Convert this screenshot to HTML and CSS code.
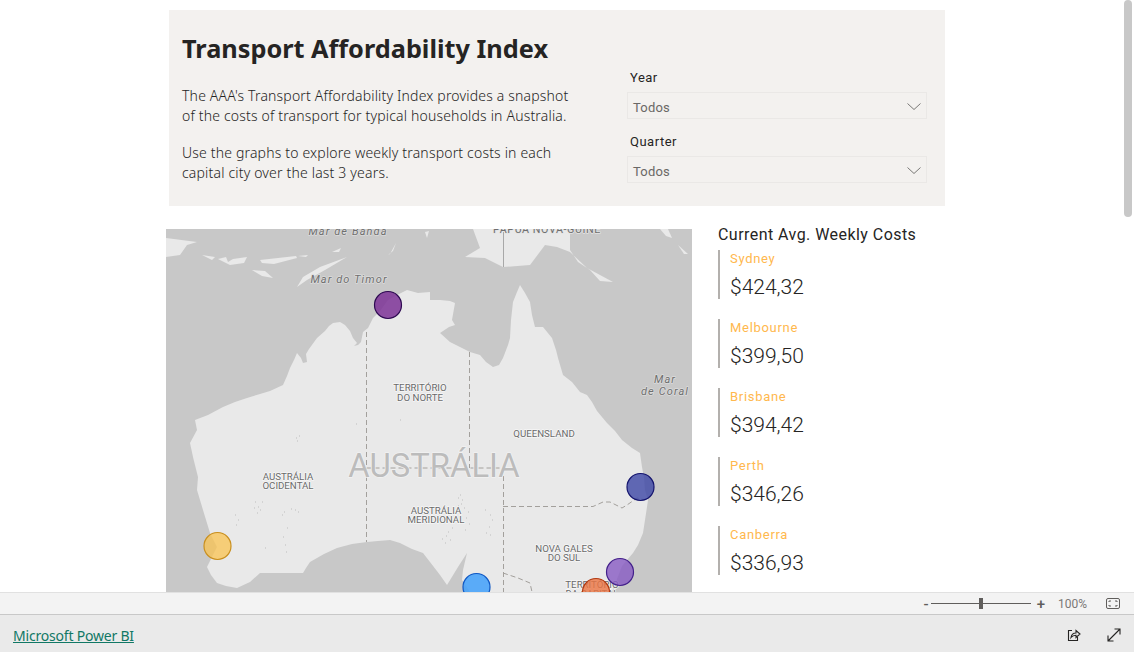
FILE: index.html
```html
<!DOCTYPE html>
<html lang="en">
<head>
  <meta charset="UTF-8">
  <title>Transport Affordability Index</title>
  <link rel="stylesheet" href="styles.css">
</head>
<body>
  <div class="report">
    <!-- Title and slicers -->
    <section class="intro">
      <div class="intro-text">
        <h1>Transport Affordability Index</h1>
        <p>The AAA's Transport Affordability Index provides a snapshot<br>of the costs of transport for typical households in Australia.</p>
        <p>Use the graphs to explore weekly transport costs in each<br>capital city over the last 3 years.</p>
      </div>
      <div class="slicers">
        <div class="slicer">
          <label>Year</label>
          <div class="dropdown">
            <span>Todos</span>
            <svg class="chevron" viewBox="0 0 14 7"><path d="M0.5 0.5 L7 6.5 L13.5 0.5"/></svg>
          </div>
        </div>
        <div class="slicer">
          <label>Quarter</label>
          <div class="dropdown">
            <span>Todos</span>
            <svg class="chevron" viewBox="0 0 14 7"><path d="M0.5 0.5 L7 6.5 L13.5 0.5"/></svg>
          </div>
        </div>
      </div>
    </section>

    <section class="content">
      <!-- Map, coordinates are page pixels -->
      <div class="map">
        <svg viewBox="166 229 526 363" width="526" height="363">
          <rect class="sea" x="166" y="229" width="526" height="363"/>
          <g class="land">
            <path d="M208 415 L223 407 L235 402 L247 398 L260 394 L270 391 L283 385 L287 376 L290 368 L294 360 L297 353 L301 358 L303 363 L307 362 L306 354 L309 349 L317 338 L325 331 L329 326 L333 323 L340 322 L345 325 L350 331 L353 338 L357 343 L354 346 L358 345 L361 342 L363 332 L368 328 L373 318 L380 311 L388 300 L397 295 L407 290 L418 293 L430 292 L430 300 L440 300 L450 301 L455 303 L452 320 L455 325 L449 327 L440 333 L450 342 L460 347 L470 352 L480 355 L486 362 L493 367 L499 365 L503 358 L508 345 L510 338 L511 320 L513 302 L517 292 L520 285 L525 293 L530 302 L532 315 L535 327 L543 327 L552 338 L556 350 L558 358 L563 375 L572 382 L580 392 L587 395 L592 402 L597 411 L607 423 L615 431 L622 440 L632 448 L640 453 L641 460 L642 467 L644 478 L645 490 L648 500 L647 507 L645 520 L643 533 L638 545 L633 553 L622 566 L612 592 L470 592 L462 580 L463 570 L467 553 L458 567 L447 585 L440 575 L430 562 L423 553 L412 549 L400 543 L390 540 L378 541 L367 542 L352 544 L337 548 L324 554 L310 562 L306 568 L303 573 L280 573 L260 573 L250 582 L237 588 L226 586 L217 583 L211 575 L207 567 L217 547 L210 533 L203 510 L200 500 L197 490 L198 477 L193 457 L190 443 L197 430 L195 420 Z"/>
            <path d="M473 229 L480 248 L465 257 L485 258 L503 267 L530 265 L545 245 L557 247 L570 252 L587 268 L600 275 L613 282 L600 281 L590 270 L578 262 L570 250 L570 229 Z"/>
            <path d="M166 238 L197 242 L187 245 L180 255 L166 257 Z"/>
            <path d="M202 255 L215 257 L212 260 Z"/>
            <path d="M218 259 L226 257 L228 262 L233 259 L247 257 L244 263 L230 265 Z"/>
            <path d="M260 260 L296 256 L297 258 L274 264 L262 263 Z"/>
            <path d="M298 256 L308 255 L306 257 Z"/>
            <path d="M252 270 L265 271 L273 278 L262 276 Z"/>
            <path d="M297 287 L303 277 L320 267 L347 257 L325 270 L307 280 Z"/>
            <path d="M332 252 L341 248 L339 252 Z"/>
            <path d="M390 254 L396 243 L393 251 L388 255 Z"/>
            <path d="M660 229 L668 229 L672 238 L666 236 Z"/>
            <path d="M678 245 L688 254 L684 254 Z"/>
            <path d="M425 232 L429 231 L427 238 Z"/>
          </g>
          <g class="borders">
            <path d="M366.5 332 V542"/>
            <path d="M366.5 468 H503"/>
            <path d="M469.5 352 V468"/>
            <path d="M503.5 468 V592"/>
            <path d="M503 506.5 H593 L603 502 L610 502 L622 508 L627 505 L637 498 L645 500"/>
            <path d="M503 573 L518 578 L530 583 L532 592"/>
          </g>
          <path class="png-border" d="M503.5 232 V267"/>
          <g class="dots">
            <path d="M296 438h1M299 436h1M297 441h1M400 420h1M356 424h1M262 502h1M258 507h1M254 508h1M260 510h1M257 513h1M295 510h1M298 512h1M291 509h1M235 515h1M238 520h1M236 525h1M284 512h1M282 515h1M287 528h1M283 537h1M285 545h1M286 552h1M265 548h1M255 502h1"/>
            <path d="M460 495h1M458 498h1M462 500h1M461 504h1M458 506h1M464 508h1M468 512h1M466 518h1M469 524h1M465 530h1M452 528h1M448 532h1M446 536h1M442 539h1M450 540h1M445 543h1M485 510h1M490 515h1M492 520h1M489 527h1M486 533h1M490 535h1"/>
          </g>
          <g class="sea-labels">
            <text x="348" y="235">Mar de Banda</text>
            <text x="349" y="283">Mar do Timor</text>
            <text x="665" y="383">Mar</text>
            <text x="665" y="395">de Coral</text>
          </g>
          <text class="country-label top" x="547" y="233">PAPUA NOVA-GUINÉ</text>
          <text class="country-label" x="434" y="477">AUSTRÁLIA</text>
          <g class="state-labels">
            <text x="420" y="391">TERRITÓRIO</text>
            <text x="420" y="401">DO NORTE</text>
            <text x="544" y="437">QUEENSLAND</text>
            <text x="288" y="480">AUSTRÁLIA</text>
            <text x="288" y="489">OCIDENTAL</text>
            <text x="436" y="514">AUSTRÁLIA</text>
            <text x="436" y="523">MERIDIONAL</text>
            <text x="564" y="552">NOVA GALES</text>
            <text x="564" y="561">DO SUL</text>
            <text x="592" y="588">TERRITÓRIO</text>
            <text x="592" y="597">DA CAPITAL</text>
          </g>
          <circle class="dot-purple" cx="388" cy="305" r="13.5"/>
          <circle class="dot-yellow" cx="217.5" cy="546" r="13.5"/>
          <circle class="dot-navy" cx="640.5" cy="487" r="13.5"/>
          <circle class="dot-orange" cx="596" cy="592" r="13.5"/>
          <circle class="dot-lilac" cx="620" cy="572" r="13.5"/>
          <circle class="dot-blue" cx="476.5" cy="587" r="13.5"/>
        </svg>
      </div>

      <!-- Cards -->
      <div class="costs">
        <h2>Current Avg. Weekly Costs</h2>
        <div class="card"><span class="city">Sydney</span><span class="cost">$424,32</span></div>
        <div class="card"><span class="city">Melbourne</span><span class="cost">$399,50</span></div>
        <div class="card"><span class="city">Brisbane</span><span class="cost">$394,42</span></div>
        <div class="card"><span class="city">Perth</span><span class="cost">$346,26</span></div>
        <div class="card"><span class="city">Canberra</span><span class="cost">$336,93</span></div>
      </div>
    </section>
    <div class="scroll-thumb"></div>
  </div>

  <div class="zoom-bar">
    <span class="zoom-sign minus">-</span>
    <div class="zoom-track"><div class="zoom-thumb"></div></div>
    <span class="zoom-sign plus">+</span>
    <span class="zoom-value">100%</span>
    <svg class="fit-icon" width="14" height="11" viewBox="0 0 14 11">
      <rect x="0.5" y="0.5" width="13" height="10" rx="1.5"/>
      <path d="M3 4 V3 H5 M9 3 H11 V4 M11 7 V8 H9 M5 8 H3 V7"/>
    </svg>
  </div>

  <footer class="footer">
    <a href="#">Microsoft Power BI</a>
    <div class="footer-icons">
      <svg width="14" height="14" viewBox="0 0 14 14">
        <path d="M5 2.5 H1.5 V12.5 H10.5 V9"/>
        <path d="M4 9.5 C4.5 6.5 6.5 5 9 5 V2.5 L13 6 L9 9.5 V7.2 C7 7.2 5.2 8 4 9.5 Z"/>
      </svg>
      <svg width="14" height="14" viewBox="0 0 14 14">
        <path d="M1 13 L13 1 M7.5 1 H13 V6.5 M1 7.5 V13 H6.5"/>
      </svg>
    </div>
  </footer>
</body>
</html>
```

FILE: styles.css
```css
* {
  box-sizing: border-box;
  margin: 0;
  padding: 0;
}

body {
  width: 1134px;
  height: 652px;
  overflow: hidden;
  background: #fff;
  font-family: 'Noto Sans', sans-serif;
  color: #252423;
}

.report {
  position: relative;
  height: 592px;
  overflow: hidden;
}

/* Title panel */
.intro {
  display: flex;
  width: 776px;
  height: 196px;
  margin: 10px 0 0 169px;
  background: #f3f1ef;
}

.intro-text {
  width: 445px;
  padding: 20px 0 0 13px;
}

h1 {
  font-size: 25.3px;
  line-height: 36px;
  font-weight: 700;
  color: #252423;
  margin-bottom: 20px;
}

.intro-text p {
  font-size: 14px;
  font-weight: 300;
  line-height: 20px;
  letter-spacing: 0.18px;
  margin-bottom: 17px;
  color: #252423;
}

.slicers {
  width: 300px;
  margin-left: 13px;
  padding-top: 60px;
}

.slicer {
  margin-bottom: 15px;
}

.slicer label {
  display: block;
  font-family: 'Roboto', sans-serif;
  font-size: 13px;
  line-height: 16px;
  margin: 0 0 6px 3px;
  letter-spacing: 0.5px;
  color: #252423;
}

.dropdown {
  display: flex;
  align-items: center;
  justify-content: space-between;
  height: 27px;
  padding: 4px 5px 0 5px;
  border: 1px solid #eae8e6;
  font-family: 'Roboto', sans-serif;
  font-size: 13px;
  color: #6a6866;
  letter-spacing: 0.2px;
}

.chevron {
  width: 14px;
  height: 7px;
  margin-top: -2px;
  fill: none;
  stroke: #7a7876;
  stroke-width: 1;
}

/* Map + cards */
.content {
  display: flex;
  margin: 23px 0 0 166px;
}

.map {
  width: 526px;
  height: 363px;
  overflow: hidden;
}

.map svg {
  display: block;
}

.sea {
  fill: #c8c8c8;
}

.land path {
  fill: #e9e9e9;
}

.borders path {
  fill: none;
  stroke: #a3a09c;
  stroke-width: 1;
  stroke-dasharray: 5 3;
}

.png-border {
  fill: none;
  stroke: #a8a8a8;
  stroke-width: 1;
}

.dots path {
  fill: none;
  stroke: #bdbdbd;
  stroke-width: 1;
}

.map text {
  font-family: 'Roboto', sans-serif;
  text-anchor: middle;
  paint-order: stroke;
  stroke-linejoin: round;
}

.sea-labels text {
  font-size: 11px;
  font-style: italic;
  letter-spacing: 1.1px;
  fill: #6f6f6f;
  stroke: #dcdcdc;
  stroke-width: 1.5px;
}

.country-label {
  font-size: 32.8px;
  fill: #bcbcbc;
  stroke: #f2f2f2;
  stroke-width: 1.5px;
}

.country-label.top {
  font-size: 10.7px;
  letter-spacing: 0.6px;
  fill: #6f6f6f;
  stroke: #e4e4e4;
}

.state-labels text {
  font-size: 9.7px;
  fill: #6a6a6a;
  stroke: #f7f7f7;
  stroke-width: 1.5px;
}

.map circle {
  stroke-width: 1.2;
}

.dot-purple { fill: rgba(125, 50, 150, 0.85); stroke: #2e0a52; }
.dot-yellow { fill: rgba(250, 195, 80, 0.75); stroke: #c98f1e; }
.dot-navy { fill: rgba(60, 70, 165, 0.8); stroke: #14146e; }
.dot-orange { fill: rgba(235, 115, 65, 0.8); stroke: #b23a12; }
.dot-lilac { fill: rgba(135, 90, 195, 0.8); stroke: #43208a; }
.dot-blue { fill: rgba(65, 160, 250, 0.85); stroke: #0f58c4; }

.costs {
  margin-left: 26px;
  width: 230px;
}

.costs h2 {
  font-family: 'Roboto', sans-serif;
  font-size: 16px;
  line-height: 12px;
  font-weight: 400;
  letter-spacing: 0.45px;
  color: #252423;
  margin-bottom: 9px;
}

.card {
  display: flex;
  flex-direction: column;
  height: 49px;
  margin-bottom: 20px;
  padding: 1px 0 0 10px;
  border-left: 2px solid #b3b0ad;
}

.city {
  font-family: 'Roboto', sans-serif;
  font-size: 13px;
  line-height: 16px;
  letter-spacing: 0.7px;
  color: #ffb84d;
}

.cost {
  font-family: 'Roboto', sans-serif;
  font-size: 21px;
  font-weight: 300;
  line-height: 26px;
  margin-top: 7px;
  color: #252423;
}

.scroll-thumb {
  position: absolute;
  top: 0;
  right: 2px;
  width: 8px;
  height: 217px;
  border-radius: 4px;
  background: #c8c8c8;
}

/* Zoom bar */
.zoom-bar {
  display: flex;
  align-items: center;
  height: 23px;
  padding-left: 921px;
  background: #f3f3f3;
  border-top: 1px solid #e1e1e1;
  border-bottom: 1px solid #c8c8c8;
  font-family: 'Roboto', sans-serif;
  color: #605e5c;
}

.zoom-sign {
  width: 10px;
  font-size: 15px;
  font-weight: 500;
  line-height: 14px;
  text-align: center;
}

.zoom-track {
  position: relative;
  width: 100px;
  height: 1px;
  background: #605e5c;
}

.zoom-thumb {
  position: absolute;
  left: 48px;
  top: -5px;
  width: 4px;
  height: 11px;
  background: #605e5c;
}

.plus {
  margin-left: 5px;
}

.zoom-value {
  margin-left: 12px;
  font-size: 12px;
  color: #7a7876;
}

.fit-icon {
  margin-left: 19px;
  fill: none;
  stroke: #605e5c;
  stroke-width: 1;
}

/* Footer */
.footer {
  display: flex;
  align-items: center;
  justify-content: space-between;
  height: 37px;
  padding: 2px 13px 0;
  background: #eaeaea;
}

.footer a {
  margin-top: 2px;
  font-size: 14px;
  letter-spacing: -0.2px;
  color: #117865;
  text-decoration: underline;
}

.footer-icons {
  display: flex;
  gap: 26px;
}

.footer-icons svg {
  fill: none;
  stroke: #252423;
  stroke-width: 1.1;
}
```
